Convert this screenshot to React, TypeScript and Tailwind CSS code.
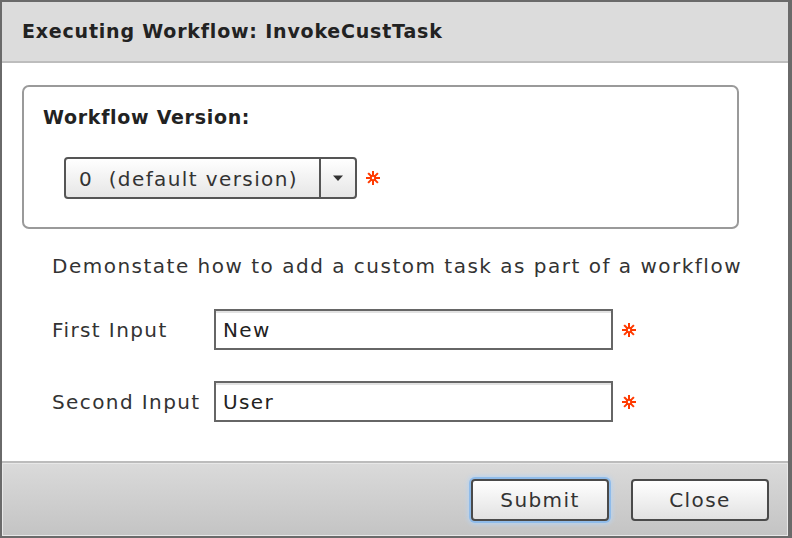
import React from 'react';

const Required: React.FC = () => (
  <svg width="14" height="14" viewBox="0 0 14 14" className="shrink-0">
    <g stroke="#ff3a00" strokeWidth="2" strokeLinecap="square">
      <line x1="7" y1="1" x2="7" y2="13" />
      <line x1="1" y1="7" x2="13" y2="7" />
      <line x1="2.8" y1="2.8" x2="11.2" y2="11.2" />
      <line x1="11.2" y1="2.8" x2="2.8" y2="11.2" />
    </g>
    <circle cx="7" cy="7" r="3.2" fill="#ff3a00" />
    <circle cx="7" cy="7" r="1.2" fill="#ffffff" />
  </svg>
);

const TextField: React.FC<{ label: string; value: string }> = ({ label, value }) => (
  <div className="flex items-center">
    <span className="w-[162px] text-[20px] tracking-[1.4px] text-[#333]">{label}</span>
    <div className="w-[399px] h-[41px] border-2 border-[#666] bg-white shadow-[inset_0_2px_0_#e2e2e2] flex items-center pl-[7px] text-[20px] tracking-[1.4px] text-[#222]">
      {value}
    </div>
    <span className="ml-[9px]">
      <Required />
    </span>
  </div>
);

export default function App() {
  return (
    <div className="w-[792px] h-[538px] flex flex-col bg-white border-t-2 border-l-2 border-r-4 border-b-2 border-[#6a6a6a] font-['DejaVu_Sans',sans-serif]">
      {/* header */}
      <div className="h-[61px] shrink-0 bg-[#dcdcdc] border-b-2 border-[#bdbdbd] flex items-center pl-[20px]">
        <h1 className="text-[19px] font-bold text-[#222] tracking-[0.8px]">Executing Workflow: InvokeCustTask</h1>
      </div>

      {/* body */}
      <div className="flex-1 px-[20px] pt-[22px]">
        <div className="w-[717px] h-[144px] border-2 border-[#9a9a9a] rounded-[7px] pl-[19px] pt-[18px]">
          <div className="text-[19px] font-bold text-[#222] tracking-[0.7px] leading-[24px]">Workflow Version:</div>
          <div className="flex items-center mt-[28px] ml-[21px]">
            <div className="w-[293px] h-[42px] flex rounded-[4px] border-2 border-[#555] bg-gradient-to-b from-white to-[#e6e6e6]">
              <div className="flex-1 flex items-center pl-[13px] pt-[2px] text-[20px] tracking-[1.4px] text-[#333] whitespace-pre border-r-2 border-[#555]">0  (default version)</div>
              <div className="w-[34px] flex items-center justify-center">
                <svg width="12" height="8" viewBox="0 0 12 8">
                  <path d="M1 1.5 H11 L6 7 Z" fill="#333" />
                </svg>
              </div>
            </div>
            <span className="ml-[9px]">
              <Required />
            </span>
          </div>
        </div>

        <div className="ml-[30px] mt-[24px] text-[20px] tracking-[1.5px] text-[#333] leading-[26px] whitespace-nowrap">
          Demonstate how to add a custom task as part of a workflow
        </div>

        <div className="ml-[30px] mt-[30px] flex flex-col gap-[31px]">
          <TextField label="First Input" value="New" />
          <TextField label="Second Input" value="User" />
        </div>
      </div>

      {/* footer */}
      <div className="h-[75px] shrink-0 border-t-2 border-[#bcbcbc]">
        <div className="h-full border border-[#e8e8e8] bg-gradient-to-b from-[#dadada] to-[#c4c4c4] flex items-center justify-end gap-[22px] pr-[18px]">
          <button className="w-[138px] h-[42px] rounded-[4px] border-2 border-[#4a4a4a] bg-gradient-to-b from-white to-[#e2e2e2] text-[20px] tracking-[1.4px] text-[#333] shadow-[0_0_0_2px_#8fbbe9,0_0_4px_3px_#b8d4f2]">
            Submit
          </button>
          <button className="w-[138px] h-[42px] rounded-[4px] border-2 border-[#4a4a4a] bg-gradient-to-b from-white to-[#e2e2e2] text-[20px] tracking-[1.4px] text-[#333]">
            Close
          </button>
        </div>
      </div>
    </div>
  );
}
